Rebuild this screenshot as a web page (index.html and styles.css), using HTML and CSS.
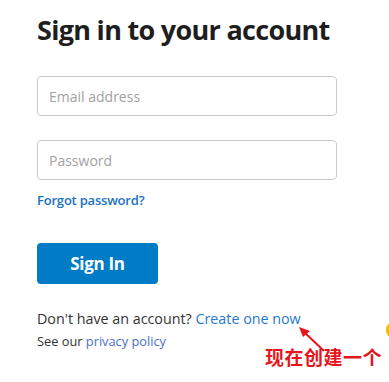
FILE: index.html
```html
<!DOCTYPE html>
<html lang="en">
<head>
  <meta charset="UTF-8" />
  <meta name="viewport" content="width=device-width,initial-scale=1.0" />
  <title>Sign in</title>
  <link rel="stylesheet" href="styles.css">
</head>
<body>
  <!-- Sign in form -->
  <div class="signin">
    <h1>Sign in to your account</h1>

    <form class="signin-form">
      <input type="text" class="field" placeholder="Email address">
      <input type="password" class="field" placeholder="Password">
      <a href="#" class="forgot">Forgot password?</a>
      <button type="button" class="btn-signin">Sign In</button>
    </form>

    <p class="signup">Don't have an account? <a href="#">Create one now</a></p>
    <p class="privacy">See our <a href="#">privacy policy</a></p>
  </div>

  <!-- Annotation drawn over the screenshot -->
  <svg class="note-arrow" width="40" height="30" viewBox="0 0 40 30">
    <line x1="6" y1="4" x2="27" y2="24" stroke="#e8141c" stroke-width="2" />
    <polygon points="2,0 13,4 6,10" fill="#e8141c" />
  </svg>
  <div class="note">现在创建一个</div>
  <div class="blob"></div>
</body>
</html>
```

FILE: styles.css
```css
body {
  margin: 0;
  background: #fff;
  font-family: "Open Sans", "Noto Sans", sans-serif;
  color: #333;
  width: 389px;
  height: 382px;
  overflow: hidden;
  position: relative;
}

.signin {
  padding: 11px 0 0 37px;
}

h1 {
  margin: 0;
  font-size: 27px;
  font-weight: 700;
  color: #1e1e1e;
  letter-spacing: -0.7px;
  line-height: 38px;
}

.signin-form {
  display: flex;
  flex-direction: column;
  align-items: flex-start;
  margin-top: 27px;
}

.field {
  box-sizing: border-box;
  width: 300px;
  height: 40px;
  border: 1px solid #c6cbd0;
  border-radius: 4px;
  padding: 0 11px;
  font-family: inherit;
  font-size: 14px;
  color: #333;
  margin-bottom: 24px;
}
.field::placeholder {
  color: #a2a2a2;
}
.field + .field {
  margin-bottom: 11px;
}

.forgot {
  font-size: 13px;
  font-weight: 600;
  color: #1a72c2;
  text-decoration: none;
  line-height: 18px;
  letter-spacing: -0.2px;
}

.btn-signin {
  margin-top: 34px;
  width: 121px;
  height: 41px;
  border: 0;
  border-radius: 4px;
  background: #007bc6;
  color: #fff;
  font-family: inherit;
  font-size: 17px;
  font-weight: 700;
  letter-spacing: -0.3px;
}

.signup {
  margin: 25px 0 0;
  font-size: 14.3px;
  line-height: 20px;
  color: #333;
}
.privacy {
  margin: 3px 0 0;
  font-size: 12.8px;
  line-height: 18px;
  color: #333;
}
.signup a,
.privacy a {
  color: #1f7acc;
  text-decoration: none;
}
.privacy a {
  color: #4a6fcf;
}

/* red annotation over the page */
.note {
  position: absolute;
  left: 265px;
  top: 343px;
  font-family: "Noto Sans CJK SC", sans-serif;
  font-size: 19px;
  font-weight: 700;
  color: #e8141c;
  letter-spacing: 0.5px;
}
.note-arrow {
  position: absolute;
  left: 297px;
  top: 327px;
}
.blob {
  position: absolute;
  left: 386px;
  top: 322px;
  width: 14px;
  height: 16px;
  border-radius: 50%;
  background: #f7b90b;
}
```
